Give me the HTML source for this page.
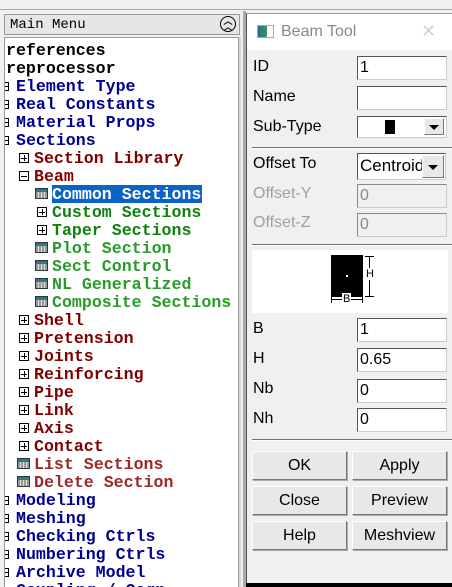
<!DOCTYPE html>
<html><head><meta charset="utf-8"><style>
*{margin:0;padding:0;box-sizing:border-box}
html,body{width:452px;height:587px;overflow:hidden}
body{background:#f0f0f0;position:relative;font-family:"Liberation Sans",sans-serif}
.a{position:absolute}
.tree{position:absolute;left:0;top:0;width:246px;height:587px;overflow:hidden;font-family:"Liberation Mono",monospace;font-weight:bold;font-size:16.6px;white-space:pre;line-height:18px}
.r{position:absolute;height:18px}
.n{color:#000090}.d{color:#800000}.g{color:#108010}.k{color:#000}.m{color:#9a2a2a}
.bx{position:absolute;width:10px;height:10px;border:1px solid #000;background:#fff}
.bx:before{content:"";position:absolute;left:1px;top:3.5px;width:6px;height:1px;background:#000}
.bx.p:after{content:"";position:absolute;left:3.5px;top:1px;width:1px;height:6px;background:#000}
.hb{position:absolute;width:4px;height:9px;border:1px solid #000;border-left:none;background:#fff}
.hb:before{content:"";position:absolute;left:0;top:3px;width:3px;height:1px;background:#000}
.ic{position:absolute;width:13px;height:11px;border:1px solid #333;background:repeating-linear-gradient(90deg,#999 0 2px,#ddd 2px 3px);}
.ic:before{content:"";position:absolute;left:0;top:0;right:0;height:3px;background:#2a7a8a}
.lbl{position:absolute;left:253px;font-size:16px;color:#000}
.gr{color:#a0a0a0}
.in{position:absolute;left:357px;width:90px;height:24px;border:1px solid #555;background:#fff;font-size:16px;padding:2px 0 0 2px;border-right-color:#ccc;border-bottom-color:#ccc}
.in.dis{background:#f0f0f0;color:#888;border-color:#888 #ccc #ccc #888}
.sep{position:absolute;left:252px;width:200px;height:2px;background:#707070;border-bottom:1px solid #fff}
.btn{position:absolute;width:95px;height:29px;background:#e8e8e8;border:1px solid;border-color:#fff #777 #777 #fff;box-shadow:1px 1px 0 #aaa;font-size:16px;text-align:center;line-height:27px}
.arr{position:absolute;width:0;height:0;border-left:5px solid transparent;border-right:5px solid transparent;border-top:5px solid #000}
</style></head><body>
<div class="a" style="left:0;top:0;width:452px;height:10px;background:#f0f0f0;border-bottom:1px solid #aaa"></div>
<div class="a" style="left:0;top:11px;width:246px;height:576px;background:#f0f0f0"></div>
<div class="a" style="left:4px;top:14px;width:236px;height:21px;background:#e6e6e6;border:1px solid #999"></div>
<div class="a" style="left:10px;top:17px;font-family:'Liberation Mono',monospace;font-size:14px;color:#000">Main Menu</div>
<div class="a" style="left:220px;top:16px;width:16px;height:16px;border:1.5px solid #000;border-radius:50%;font-size:9px;text-align:center;line-height:6px;font-weight:bold;padding-top:1px">︿<br>︿</div>
<div class="a" style="left:4px;top:37px;width:236px;height:550px;background:#fff;border:1px solid #999;border-bottom:none"></div>
<div class="a" style="left:238px;top:37px;width:3px;height:550px;background:#d8d8d8;border-left:1px solid #999"></div>
<div class="a" style="left:243px;top:11px;width:3px;height:576px;background:#aaa"></div>
<div class="tree">
<div class="r k" style="left:6px;top:42px">references</div>
<div class="r k" style="left:6px;top:60px">reprocessor</div>
<div class="hb" style="left:5px;top:82px"></div><div class="r n" style="left:16px;top:78px">Element Type</div>
<div class="hb" style="left:5px;top:100px"></div><div class="r n" style="left:16px;top:96px">Real Constants</div>
<div class="hb" style="left:5px;top:118px"></div><div class="r n" style="left:16px;top:114px">Material Props</div>
<div class="hb" style="left:5px;top:136px"></div><div class="r n" style="left:16px;top:132px">Sections</div>
<div class="bx p" style="left:19px;top:153px"></div><div class="r d" style="left:34px;top:150px">Section Library</div>
<div class="bx" style="left:19px;top:171px"></div><div class="r d" style="left:34px;top:168px">Beam</div>
<div class="ic" style="left:35px;top:188px"></div><div class="r" style="left:52px;top:185px;background:#0a64c8;color:#fff;width:150px;line-height:20px">Common Sections</div>
<div class="bx p" style="left:37px;top:207px"></div><div class="r g" style="left:52px;top:204px">Custom Sections</div>
<div class="bx p" style="left:37px;top:225px"></div><div class="r g" style="left:52px;top:222px">Taper Sections</div>
<div class="ic" style="left:35px;top:242px"></div><div class="r g" style="left:52px;top:240px;color:#2a9a2a">Plot Section</div>
<div class="ic" style="left:35px;top:260px"></div><div class="r g" style="left:52px;top:258px;color:#2a9a2a">Sect Control</div>
<div class="ic" style="left:35px;top:278px"></div><div class="r g" style="left:52px;top:276px;color:#2a9a2a">NL Generalized</div>
<div class="ic" style="left:35px;top:296px"></div><div class="r g" style="left:52px;top:294px;color:#2a9a2a">Composite Sections</div>
<div class="bx p" style="left:19px;top:315px"></div><div class="r d" style="left:34px;top:312px">Shell</div>
<div class="bx p" style="left:19px;top:333px"></div><div class="r d" style="left:34px;top:330px">Pretension</div>
<div class="bx p" style="left:19px;top:351px"></div><div class="r d" style="left:34px;top:348px">Joints</div>
<div class="bx p" style="left:19px;top:369px"></div><div class="r d" style="left:34px;top:366px">Reinforcing</div>
<div class="bx p" style="left:19px;top:387px"></div><div class="r d" style="left:34px;top:384px">Pipe</div>
<div class="bx p" style="left:19px;top:405px"></div><div class="r d" style="left:34px;top:402px">Link</div>
<div class="bx p" style="left:19px;top:423px"></div><div class="r d" style="left:34px;top:420px">Axis</div>
<div class="bx p" style="left:19px;top:441px"></div><div class="r d" style="left:34px;top:438px">Contact</div>
<div class="ic" style="left:17px;top:458px"></div><div class="r m" style="left:34px;top:456px">List Sections</div>
<div class="ic" style="left:17px;top:476px"></div><div class="r m" style="left:34px;top:474px">Delete Section</div>
<div class="hb" style="left:5px;top:496px"></div><div class="r n" style="left:16px;top:492px">Modeling</div>
<div class="hb" style="left:5px;top:514px"></div><div class="r n" style="left:16px;top:510px">Meshing</div>
<div class="hb" style="left:5px;top:532px"></div><div class="r n" style="left:16px;top:528px">Checking Ctrls</div>
<div class="hb" style="left:5px;top:550px"></div><div class="r n" style="left:16px;top:546px">Numbering Ctrls</div>
<div class="hb" style="left:5px;top:568px"></div><div class="r n" style="left:16px;top:564px">Archive Model</div>
<div class="r n" style="left:16px;top:582px">Coupling / Ceqn</div>
</div>
<div class="a" style="left:246px;top:13px;width:206px;height:574px;background:#f0f0f0;border-left:1px solid #555;border-top:1px solid #999"></div>
<div class="a" style="left:247px;top:14px;width:205px;height:36px;background:#fff"></div>
<div class="a" style="left:257px;top:25px;width:17px;height:13px;border:1px solid #aaa;background:linear-gradient(90deg,#2a6a8a,#3a9a5a 60%,#fff 60%)"></div>
<div class="a" style="left:281px;top:23px;font-size:16px;color:#888">Beam Tool</div>
<div class="a" style="left:421px;top:21px;font-size:18px;color:#d0d0d0">✕</div>
<div class="lbl" style="top:58px">ID</div><div class="in" style="top:56px">1</div>
<div class="lbl" style="top:88px">Name</div><div class="in" style="top:86px"></div>
<div class="lbl" style="top:118px">Sub-Type</div>
<div class="in" style="top:116px;height:22px;border-color:#555 #ccc #ccc #555"><div class="a" style="left:27px;top:3px;width:10px;height:14px;background:#000"></div><div class="a" style="left:66px;top:1px;width:20px;height:17px;background:#e8e8e8;border:1px solid;border-color:#fff #777 #777 #fff"><div class="arr" style="left:4px;top:6px"></div></div></div>
<div class="sep" style="top:147px"></div>
<div class="lbl" style="top:155px">Offset To</div>
<div class="in" style="top:153px;width:89px;height:27px;font-size:17px;overflow:hidden;white-space:nowrap">Centroid<div class="a" style="left:64px;top:1px;width:22px;height:23px;background:#e8e8e8;border:1px solid;border-color:#fff #777 #777 #fff"><div class="arr" style="left:5px;top:9px"></div></div></div>
<div class="lbl gr" style="top:185px">Offset-Y</div><div class="in dis" style="top:184px">0</div>
<div class="lbl gr" style="top:214px">Offset-Z</div><div class="in dis" style="top:213px">0</div>
<div class="sep" style="top:244px"></div>
<div class="a" style="left:252px;top:250px;width:196px;height:63px;background:#fff"></div>
<div class="a" style="left:331px;top:255px;width:32px;height:42px;background:#000"></div>
<div class="a" style="left:346px;top:275px;width:2px;height:2px;background:#fff"></div>
<div class="a" style="left:369px;top:256px;width:1px;height:41px;background:#000"></div>
<div class="a" style="left:365px;top:256px;width:9px;height:1px;background:#000"></div>
<div class="a" style="left:365px;top:296px;width:9px;height:1px;background:#000"></div>
<div class="a" style="left:366px;top:268px;font-size:11px;background:#fff">H</div>
<div class="a" style="left:331px;top:299px;width:32px;height:1px;background:#000"></div>
<div class="a" style="left:331px;top:296px;width:1px;height:7px;background:#000"></div>
<div class="a" style="left:362px;top:296px;width:1px;height:7px;background:#000"></div>
<div class="a" style="left:342px;top:293px;font-size:11px;background:#fff;padding:0 1px">B</div>
<div class="lbl" style="top:320px">B</div><div class="in" style="top:318px">1</div>
<div class="lbl" style="top:350px">H</div><div class="in" style="top:348px">0.65</div>
<div class="lbl" style="top:380px">Nb</div><div class="in" style="top:379px">0</div>
<div class="lbl" style="top:410px">Nh</div><div class="in" style="top:408px">0</div>
<div class="sep" style="top:439px"></div>
<div class="btn" style="left:252px;top:451px">OK</div><div class="btn" style="left:352px;top:451px">Apply</div>
<div class="btn" style="left:252px;top:486px">Close</div><div class="btn" style="left:352px;top:486px">Preview</div>
<div class="btn" style="left:252px;top:521px">Help</div><div class="btn" style="left:352px;top:521px">Meshview</div>
<div class="a" style="left:246px;top:583px;width:206px;height:4px;background:#000"></div>
</body></html>
